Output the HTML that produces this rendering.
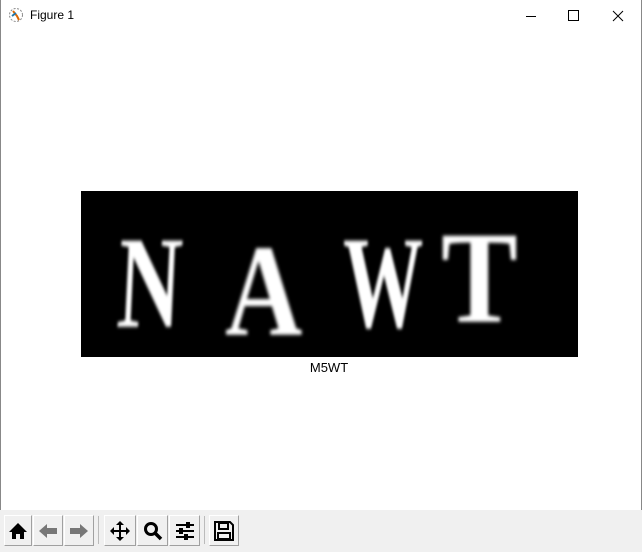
<!DOCTYPE html>
<html><head><style>
body{margin:0;width:642px;height:552px;background:#fff;position:relative;overflow:hidden;font-family:"Liberation Sans",sans-serif}
.edge{position:absolute;top:0;bottom:0;width:1px;background:#888}
.title{position:absolute;left:30px;top:8px;font-size:12px;color:#000}
.tb{position:absolute;left:0;top:510px;width:642px;height:42px;background:#f0f0f0}
.btn{position:absolute;top:5px;height:31px;background:#f0f0f0;border:1px solid #fff;border-right-color:#a0a0a0;border-bottom-color:#a0a0a0;box-sizing:border-box;display:flex;align-items:center;justify-content:center}
.sep{position:absolute;top:6px;width:1px;height:28px;background:#bbb}
.img{position:absolute;left:81px;top:191px;width:497px;height:166px;background:#000;overflow:hidden}
.L{position:absolute;color:#fff;font-family:"Liberation Serif",serif;font-weight:bold;font-size:134px;line-height:1;filter:blur(2px);transform-origin:0 0}
</style></head><body>
<div class="edge" style="left:0"></div><div class="edge" style="right:0"></div>
<svg style="position:absolute;left:8px;top:7px" width="16" height="16"><circle cx="8" cy="8" r="6.5" fill="none" stroke="#888" stroke-dasharray="2 1.5"/><path d="M5 4 L9 9 L11 13" stroke="#d60" stroke-width="2" fill="none"/><path d="M4 9 L8 6" stroke="#27a" stroke-width="2"/></svg>
<div class="title">Figure 1</div>
<svg style="position:absolute;left:520px;top:8px" width="110" height="16"><path d="M6 8.5H16" stroke="#000"/><rect x="48.5" y="2.5" width="10" height="10" fill="none" stroke="#000"/><path d="M93 3L103 13M103 3L93 13" stroke="#000"/></svg>
<div class="img">
<span class="L" style="left:40px;top:26px;transform:scale(0.66,0.98) skewX(-4deg)">N</span>
<span class="L" style="left:144px;top:34px;transform:scale(0.8,0.98)">A</span>
<span class="L" style="left:262px;top:26px;transform:scale(0.6,0.98)">W</span>
<span class="L" style="left:360px;top:21px;transform:scale(0.86,0.98)">T</span>
</div>
<div style="position:absolute;left:0;width:658px;text-align:center;top:360px;font-size:13px">M5WT</div>
<div class="tb">
<div class="btn" style="left:4px;width:28px"><svg width="20" height="18"><path d="M10 1L1 10H4V17H8V12H12V17H16V10H19Z" fill="#000"/></svg></div>
<div class="btn" style="left:33px;width:30px"><svg width="20" height="16"><path d="M1 8L9 1V5H19V11H9V15Z" fill="#777"/></svg></div>
<div class="btn" style="left:64px;width:30px"><svg width="20" height="16"><path d="M19 8L11 1V5H1V11H11V15Z" fill="#777"/></svg></div>
<div class="sep" style="left:98px"></div>
<div class="btn" style="left:104px;width:32px"><svg width="22" height="22"><path d="M11 1L7 5H10V10H5V7L1 11L5 15V12H10V17H7L11 21L15 17H12V12H17V15L21 11L17 7V10H12V5H15Z" fill="#000"/></svg></div>
<div class="btn" style="left:137px;width:31px"><svg width="20" height="20"><circle cx="8" cy="8" r="5.5" fill="none" stroke="#000" stroke-width="3"/><path d="M12 12L18 18" stroke="#000" stroke-width="3.5"/></svg></div>
<div class="btn" style="left:169px;width:31px"><svg width="20" height="20"><path d="M1 4H19M1 10H19M1 16H19" stroke="#000" stroke-width="2"/><rect x="11" y="1" width="4" height="6" fill="#000"/><rect x="4" y="7" width="4" height="6" fill="#000"/><rect x="9" y="13" width="4" height="6" fill="#000"/></svg></div>
<div class="sep" style="left:204px"></div>
<div class="btn" style="left:209px;width:30px"><svg width="20" height="20"><path d="M2 1H16L19 4V19H1V1Z" fill="none" stroke="#000" stroke-width="2"/><rect x="5" y="2" width="9" height="6" fill="none" stroke="#000" stroke-width="2"/><rect x="4" y="12" width="12" height="6" fill="none" stroke="#000" stroke-width="2"/></svg></div>
</div>
</body></html>
